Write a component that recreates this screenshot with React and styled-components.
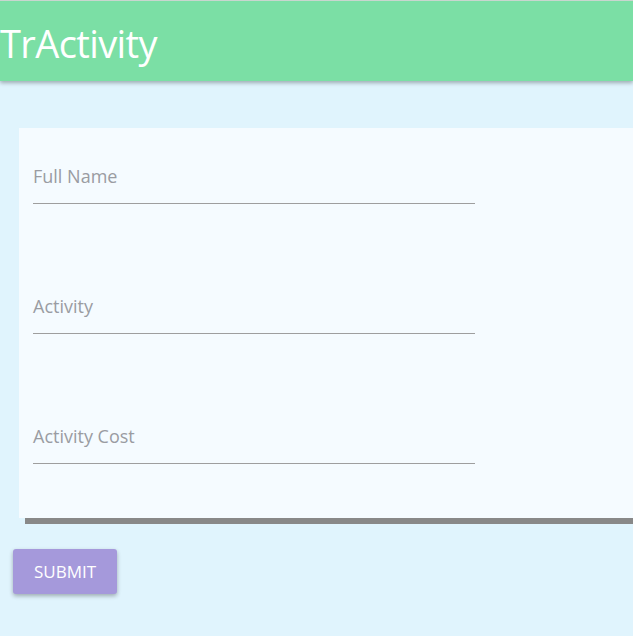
import React from "react";
import {createGlobalStyle, styled} from "styled-components";

const GlobalStyle = createGlobalStyle`
  html, body {
    margin: 0;
    padding: 0;
    background: #e0f4fd;
    overflow-x: hidden;
  }
  body {
    font-family: "Open Sans", "Noto Sans", sans-serif;
  }
`;

const fields = ["Full Name", "Activity", "Activity Cost"];

const App = () => {
  return (
    <Page>
      <GlobalStyle/>
      <Header>
        <Title>TrActivity</Title>
      </Header>

      <Main>
        <Card>
          {fields.map((label) => (
            <Field key={label}>
              <Label>{label}</Label>
            </Field>
          ))}
        </Card>

        <SubmitButton type="button">SUBMIT</SubmitButton>
      </Main>
    </Page>
  );
};

export default App;

const Page = styled.div`
  min-height: 636px;
  background: #e0f4fd;
  overflow: hidden;
`

const Header = styled.header`
  height: 80px;
  background: #7bdfa5;
  border-top: 1px solid #c9d6cf;
  box-shadow: 0 2px 4px rgba(0, 0, 0, 0.3);
  display: flex;
  align-items: center;
  position: relative;
  z-index: 2;
`

const Title = styled.h1`
  margin: 0;
  padding-top: 4px;
  font-family: "Open Sans", sans-serif;
  font-weight: 400;
  font-size: 38px;
  letter-spacing: -0.6px;
  color: #ffffff;
  line-height: 1;
`

const Main = styled.main`
  padding: 47px 0 0 13px;
`

const Card = styled.div`
  margin-left: 6px;
  width: 660px;
  padding: 0 14px;
  box-sizing: border-box;
  background: #f5fbff;
  box-shadow: 6px 6px 0 #888888;
`

const Field = styled.div`
  width: 442px;
  height: 130px;
  padding-top: 36px;
  box-sizing: border-box;
`

const Label = styled.div`
  font-family: "Open Sans", sans-serif;
  font-size: 18px;
  line-height: 24px;
  color: #9a9ca2;
  padding-bottom: 15px;
  border-bottom: 1px solid #9e9e9e;
`

const SubmitButton = styled.button`
  margin-top: 31px;
  width: 104px;
  height: 45px;
  border: none;
  border-radius: 3px;
  background: #a599db;
  color: #ffffff;
  font-family: "Open Sans", sans-serif;
  font-size: 17px;
  box-shadow: 0 2px 4px rgba(0, 0, 0, 0.3);
  cursor: pointer;
`
